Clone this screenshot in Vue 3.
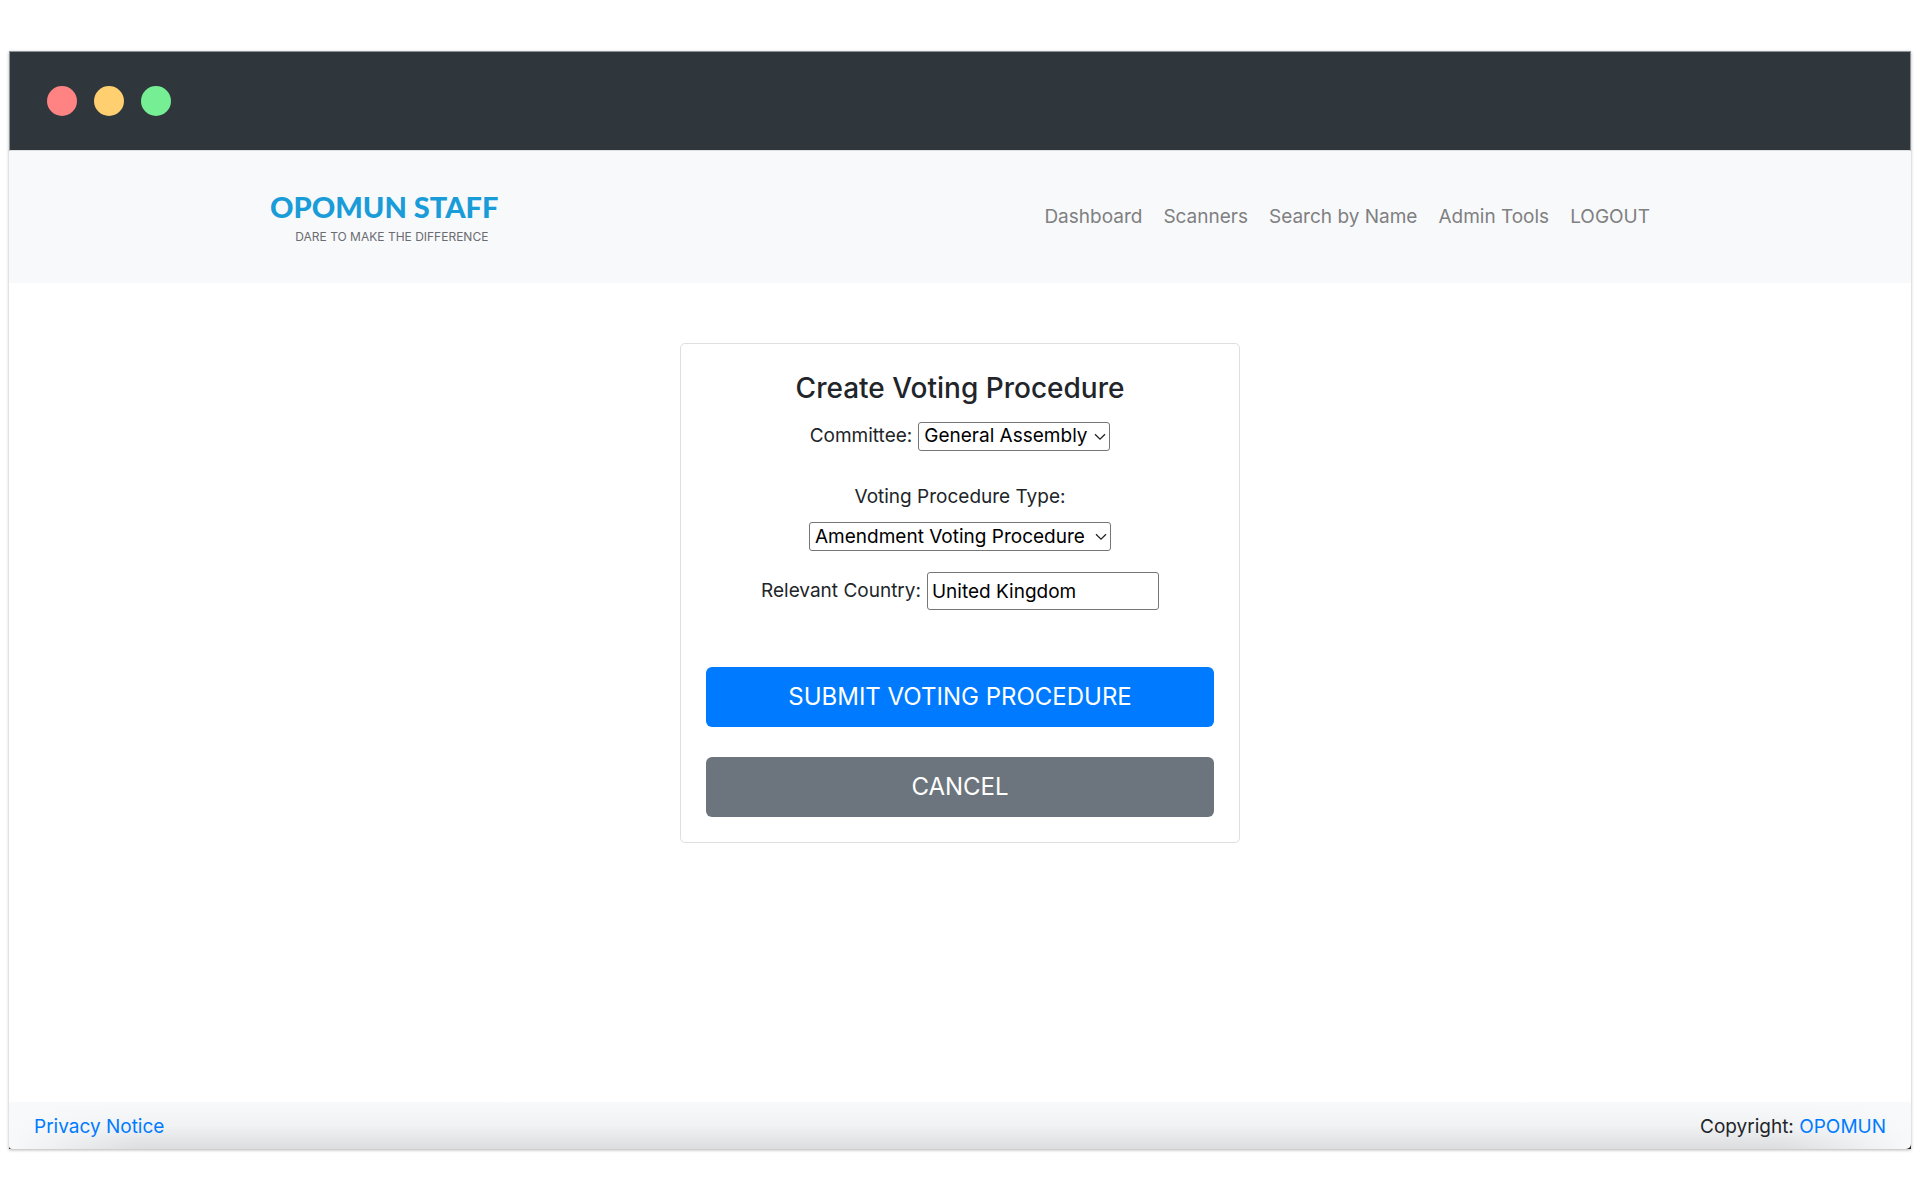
<script setup>
import { ref } from 'vue'

const links = ['Dashboard', 'Scanners', 'Search by Name', 'Admin Tools', 'LOGOUT']
const committee = ref('General Assembly')
const procedure = ref('Amendment Voting Procedure')
const country = ref('United Kingdom')
</script>

<template>
  <div class="page">
    <div class="window">
      <div class="titlebar">
        <span class="dot red"></span>
        <span class="dot yellow"></span>
        <span class="dot green"></span>
      </div>

      <header class="navbar">
        <div class="container">
          <a class="brand" href="#">
            <span class="brand-name">OPOMUN STAFF</span>
            <span class="brand-tag">DARE TO MAKE THE DIFFERENCE</span>
          </a>
          <nav class="links">
            <a v-for="link in links" :key="link" href="#">{{ link }}</a>
          </nav>
        </div>
      </header>

      <main class="content">
        <form class="card" @submit.prevent>
          <h1>Create Voting Procedure</h1>
          <div class="row">
            <label for="committee">Committee:</label>
            <span class="select committee">
              <select id="committee" v-model="committee">
                <option>General Assembly</option>
              </select>
              <svg viewBox="0 0 12 8" aria-hidden="true"><path d="M1 1.2 6 6.2 11 1.2" /></svg>
            </span>
          </div>
          <label class="type-label" for="procedure">Voting Procedure Type:</label>
          <span class="select procedure">
            <select id="procedure" v-model="procedure">
              <option>Amendment Voting Procedure</option>
            </select>
            <svg viewBox="0 0 12 8" aria-hidden="true"><path d="M1 1.2 6 6.2 11 1.2" /></svg>
          </span>
          <div class="row country">
            <label for="country">Relevant Country:</label>
            <input id="country" v-model="country" type="text" />
          </div>
          <button class="btn primary" type="submit">SUBMIT VOTING PROCEDURE</button>
          <button class="btn secondary" type="button">CANCEL</button>
        </form>
      </main>

      <footer class="footer">
        <div class="footer-bar">
          <a href="#">Privacy Notice</a>
          <span>Copyright: <a href="#">OPOMUN</a></span>
        </div>
      </footer>
    </div>
  </div>
</template>

<style>
body {
  background: #fff;
}
</style>

<style scoped>
* {
  box-sizing: border-box;
}
.page {
  display: flex;
  min-height: 100vh;
  padding: 51px 9px;
  font-family: Inter, "Liberation Sans", sans-serif;
  font-size: 19px;
  line-height: 30px;
  color: #212529;
}
.window {
  flex: 1;
  display: flex;
  flex-direction: column;
  background: #fff;
  box-shadow: 0 1px 3px rgba(0, 0, 0, 0.3);
}
.titlebar {
  display: flex;
  align-items: center;
  gap: 17px;
  height: 100px;
  padding: 0 37px;
  background: #2f373d;
  border: 1px solid #8d9297;
  border-bottom-color: #dcdfe2;
}
.dot {
  width: 30px;
  height: 30px;
  border-radius: 50%;
}
.red {
  background: #ff8383;
}
.yellow {
  background: #ffcf70;
}
.green {
  background: #76ee93;
}
.navbar {
  padding: 36px 20px;
  background: #f8f9fb;
}
.container {
  display: flex;
  align-items: center;
  justify-content: space-between;
  max-width: 1380px;
  margin: 0 auto;
}
.brand {
  display: flex;
  flex-direction: column;
  align-items: flex-end;
  text-decoration: none;
}
.brand-name {
  font-family: Lato, sans-serif;
  font-size: 29px;
  line-height: 40px;
  font-weight: 900;
  color: #1a9cd8;
}
.brand-tag {
  padding-right: 10px;
  font-size: 12px;
  line-height: 20px;
  color: #6a6c70;
}
.links {
  display: flex;
  gap: 21px;
}
.links a {
  color: #7f8081;
  text-decoration: none;
}
.content {
  flex: 1;
  padding: 60px 20px;
}
.card {
  display: flex;
  flex-direction: column;
  align-items: center;
  max-width: 560px;
  margin: 0 auto;
  padding: 25px;
  border: 1px solid #dfdfdf;
  border-radius: 5px;
}
h1 {
  margin: 0 0 14px;
  font-size: 28px;
  line-height: 38px;
  font-weight: 500;
}
.row {
  display: flex;
  align-items: center;
  gap: 6px;
}
.select {
  position: relative;
  display: flex;
  max-width: 100%;
}
.committee {
  width: 192px;
}
.procedure {
  width: 302px;
}
select,
input {
  border: 1px solid #767676;
  border-radius: 3px;
  background: #fff;
  color: #000;
  font: inherit;
}
select {
  appearance: none;
  width: 100%;
  height: 29px;
  padding: 0 0 0 5px;
  line-height: 26px;
}
.select svg {
  position: absolute;
  top: 11px;
  right: 4px;
  width: 12px;
  height: 8px;
  fill: none;
  stroke: #222;
  stroke-width: 1.3;
  pointer-events: none;
}
.type-label {
  margin: 31px 0 10px;
}
.country {
  margin: 21px 0 57px;
}
input {
  width: 232px;
  height: 38px;
  padding: 0 4px;
}
.btn {
  width: 100%;
  padding: 11px 20px;
  border: 0;
  border-radius: 6px;
  color: #fff;
  font-family: inherit;
  font-size: 24px;
  line-height: 38px;
}
.primary {
  margin-bottom: 30px;
  background: #007bff;
}
.secondary {
  background: #6c757d;
}
.footer {
  background: #222;
}
.footer-bar {
  display: flex;
  justify-content: space-between;
  padding: 10px 25px 7px;
  border-radius: 0 0 5px 3px;
  background:
    linear-gradient(to right, #f8f9fb, rgba(248, 249, 251, 0) 130px),
    linear-gradient(to left, #f8f9fb, rgba(248, 249, 251, 0) 130px),
    linear-gradient(#f8f9fb, #f1f2f4 50%, #dcddde);
}
.footer a {
  color: #007bff;
  text-decoration: none;
}
</style>
